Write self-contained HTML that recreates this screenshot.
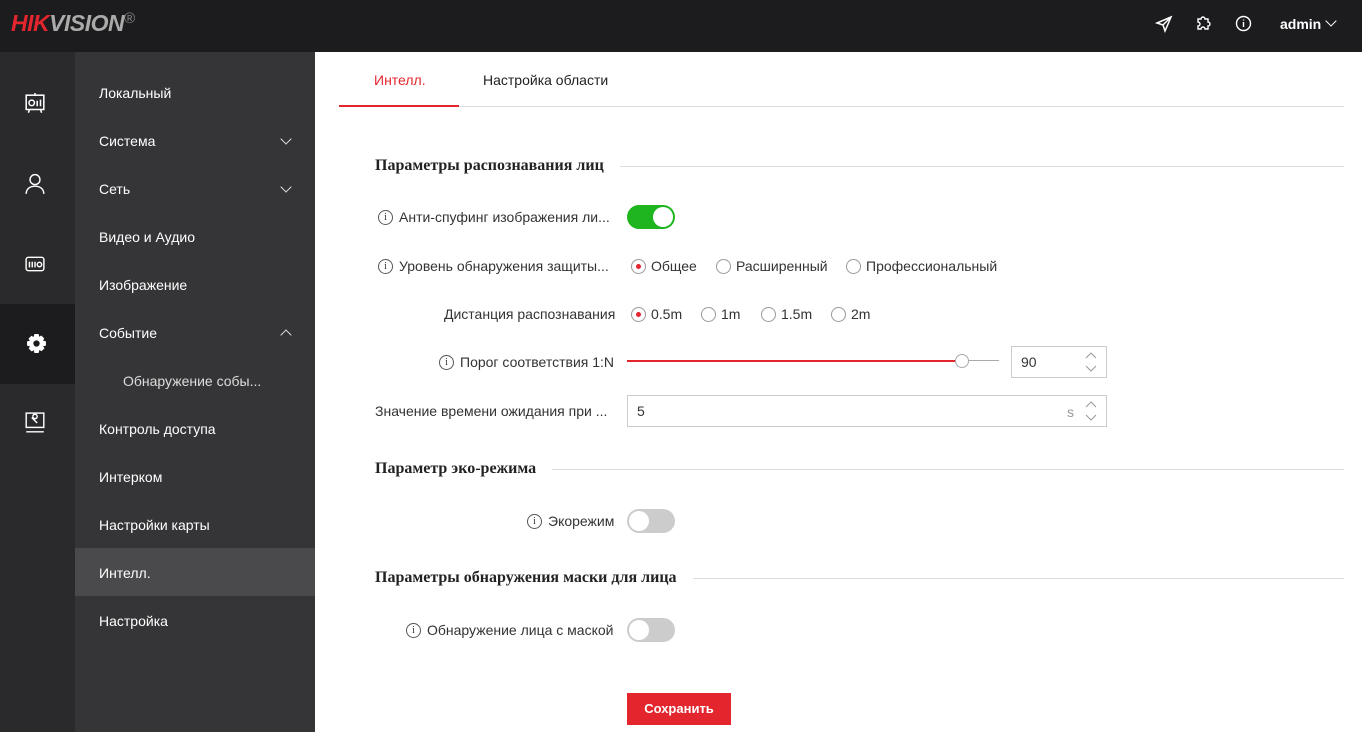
<!DOCTYPE html>
<html><head><meta charset="utf-8"><style>
*{box-sizing:border-box;margin:0;padding:0}
body{width:1362px;height:732px;overflow:hidden;font-family:"Liberation Sans",Arial,sans-serif;font-size:14px;color:#333;background:#fff;position:relative}
.top{position:absolute;left:0;top:0;width:1362px;height:52px;background:#1c1c1e}
.logo{position:absolute;left:11px;top:10px;font-size:23px;font-weight:bold;font-style:italic;letter-spacing:-0.5px}
.rail{position:absolute;left:0;top:52px;width:75px;height:680px;background:#2a2a2c}
.menu{position:absolute;left:75px;top:52px;width:240px;height:680px;background:#353537}
.mi{position:absolute;left:24px;color:#fff;font-size:14px}
.chev{position:absolute;left:207px;width:8px;height:8px;border-right:1.6px solid #ddd;border-bottom:1.6px solid #ddd}
.tab{position:absolute;top:72px;font-size:14px}
.sec{position:absolute;left:375px;font-family:"Liberation Serif",serif;font-weight:bold;font-size:16px;color:#222}
.line{position:absolute;height:1px;background:#ddd}
.lbl{position:absolute;font-size:14px;color:#333;text-align:right;white-space:nowrap}
.info{display:inline-block;width:15px;height:15px;border:1px solid #555;border-radius:50%;font-size:10px;line-height:13px;text-align:center;margin-right:6px;vertical-align:top;position:relative;top:1px;font-family:"Liberation Serif",serif}
.tg{position:absolute;left:627px;width:48px;height:24px;border-radius:12px;background:#ccc}
.tg i{position:absolute;top:2px;width:20px;height:20px;border-radius:50%;background:#fff}
.rad{position:absolute;font-size:14px;color:#333}
.rad b{display:inline-block;width:15px;height:15px;border:1px solid #999;border-radius:50%;vertical-align:-3px;margin-right:5px;position:relative}
.rad b.on::after{content:"";position:absolute;left:4px;top:4px;width:5px;height:5px;border-radius:50%;background:#e3262e}
.inp{position:absolute;border:1px solid #ccc;background:#fff;font-size:14px;padding-left:9px}
</style></head><body>
<div class="top">
<div class="logo"><span style="color:#e3262e">HIK</span><span style="color:#aaa">VISION</span><span style="color:#888;font-size:15px;font-style:normal;font-weight:normal;vertical-align:top">®</span></div>
<svg style="position:absolute;left:1155px;top:15px" width="18" height="18" viewBox="0 0 18 18" fill="none" stroke="#fff" stroke-width="1.5"><path d="M16 2L2 8l6 2 2 6z M8 10l8-8"/></svg>
<svg style="position:absolute;left:1195px;top:14px" width="18" height="18" viewBox="0 0 18 18" fill="none" stroke="#fff" stroke-width="1.4"><path d="M3 5h3a2 2 0 1 1 4 0h3v3a2 2 0 1 1 0 4v3h-3a2 2 0 1 0-4 0H3v-3a2 2 0 1 0 0-4z"/></svg>
<svg style="position:absolute;left:1235px;top:15px" width="17" height="17" viewBox="0 0 17 17" fill="none" stroke="#fff" stroke-width="1.4"><circle cx="8.5" cy="8.5" r="7"/><path d="M8.5 7v5M8.5 4.5v1"/></svg>
<div style="position:absolute;left:1280px;top:16px;color:#fff;font-weight:bold;font-size:14px">admin</div>
<div style="position:absolute;left:1327px;top:17px;width:8px;height:8px;border-right:1.5px solid #fff;border-bottom:1.5px solid #fff;transform:rotate(45deg)"></div>
</div>
<div class="rail">
<svg style="position:absolute;left:25px;top:41px" width="20" height="22" viewBox="0 0 18 20" fill="none" stroke="#fff" stroke-width="1.4"><rect x="1" y="2" width="16" height="13"/><circle cx="6" cy="9" r="2.5"/><path d="M11 7v5M14 6v6M4 15l-1 3M14 15l1 3M9 0v2"/></svg>
<svg style="position:absolute;left:25px;top:121px" width="20" height="22" viewBox="0 0 18 20" fill="none" stroke="#fff" stroke-width="1.3"><circle cx="9" cy="6" r="4.5"/><path d="M1 19c0-5 4-7 8-7s8 2 8 7"/></svg>
<svg style="position:absolute;left:25px;top:202px" width="20" height="20" viewBox="0 0 18 18" fill="none" stroke="#fff" stroke-width="1.3"><rect x="1" y="3" width="16" height="12" rx="2"/><path d="M4 7v5M6.5 7v5M9 7v5"/><circle cx="13" cy="9.5" r="2"/></svg>
<div style="position:absolute;left:0;top:252px;width:75px;height:80px;background:#1c1c1e"></div>
<svg style="position:absolute;left:26px;top:281px" width="21" height="21" viewBox="0 0 20 20"><path fill="#fff" d="M8 1h4l.6 2.6 2-1.2 2.8 2.8-1.2 2L19 8v4l-2.6.6 1.2 2-2.8 2.8-2-1.2L12 19H8l-.6-2.6-2 1.2-2.8-2.8 1.2-2L1 12V8l2.6-.6-1.2-2 2.8-2.8 2 1.2z"/><circle cx="10" cy="10" r="3" fill="#1c1c1e"/></svg>
<svg style="position:absolute;left:25px;top:360px" width="20" height="22" viewBox="0 0 18 20" fill="none" stroke="#fff" stroke-width="1.3"><rect x="1" y="1" width="16" height="13"/><path d="M1 18h16M6 5l5 5M7 4a2 2 0 1 1 0 .1"/></svg>
</div>
<div class="menu">
<div class="mi" style="top:33px">Локальный</div>
<div class="mi" style="top:81px">Система</div><div class="chev" style="top:83px;transform:rotate(45deg)"></div>
<div class="mi" style="top:129px">Сеть</div><div class="chev" style="top:131px;transform:rotate(45deg)"></div>
<div class="mi" style="top:177px">Видео и Аудио</div>
<div class="mi" style="top:225px">Изображение</div>
<div class="mi" style="top:273px">Событие</div><div class="chev" style="top:279px;transform:rotate(-135deg)"></div>
<div class="mi" style="top:321px;left:48px;color:#ddd">Обнаружение собы...</div>
<div class="mi" style="top:369px">Контроль доступа</div>
<div class="mi" style="top:417px">Интерком</div>
<div class="mi" style="top:465px">Настройки карты</div>
<div style="position:absolute;left:0;top:496px;width:240px;height:48px;background:#4a4a4c"></div>
<div class="mi" style="top:513px">Интелл.</div>
<div class="mi" style="top:561px">Настройка</div>
</div>
<div class="tab" style="left:374px;color:#e3262e">Интелл.</div>
<div class="tab" style="left:483px;color:#222">Настройка области</div>
<div class="line" style="left:339px;top:106px;width:1005px"></div>
<div style="position:absolute;left:339px;top:105px;width:120px;height:2px;background:#e3262e"></div>

<div class="sec" style="top:157px">Параметры распознавания лиц</div>
<div class="line" style="left:620px;top:166px;width:724px"></div>
<div class="lbl" style="left:378px;top:209px"><span class="info">i</span>Анти-спуфинг изображения ли...</div>
<div class="tg" style="top:205px;background:#1fb51f"><i style="left:26px"></i></div>
<div class="lbl" style="left:378px;top:258px"><span class="info">i</span>Уровень обнаружения защиты...</div>
<div class="rad" style="left:631px;top:258px"><b class="on"></b>Общее</div>
<div class="rad" style="left:716px;top:258px"><b></b>Расширенный</div>
<div class="rad" style="left:846px;top:258px"><b></b>Профессиональный</div>
<div class="lbl" style="left:444px;top:306px">Дистанция распознавания</div>
<div class="rad" style="left:631px;top:306px"><b class="on"></b>0.5m</div>
<div class="rad" style="left:701px;top:306px"><b></b>1m</div>
<div class="rad" style="left:761px;top:306px"><b></b>1.5m</div>
<div class="rad" style="left:831px;top:306px"><b></b>2m</div>
<div class="lbl" style="left:439px;top:354px"><span class="info">i</span>Порог соответствия 1:N</div>
<div style="position:absolute;left:627px;top:360px;width:335px;height:2px;background:#e3262e"></div>
<div style="position:absolute;left:962px;top:360px;width:37px;height:1px;background:#aaa"></div>
<div style="position:absolute;left:955px;top:354px;width:14px;height:14px;border-radius:50%;background:#fff;border:1px solid #aaa"></div>
<div class="inp" style="left:1011px;top:346px;width:96px;height:32px;line-height:30px">90</div>
<svg style="position:absolute;left:1085px;top:351px" width="12" height="22" viewBox="0 0 12 22" fill="none" stroke="#999" stroke-width="1"><path d="M1 7l5-5 5 5M1 15l5 5 5-5"/></svg>
<div class="lbl" style="left:375px;top:403px">Значение времени ожидания при ...</div>
<div class="inp" style="left:627px;top:395px;width:480px;height:32px;line-height:30px">5</div>
<div style="position:absolute;left:1067px;top:404px;color:#999;font-size:14px">s</div>
<svg style="position:absolute;left:1085px;top:400px" width="12" height="22" viewBox="0 0 12 22" fill="none" stroke="#999" stroke-width="1"><path d="M1 7l5-5 5 5M1 15l5 5 5-5"/></svg>

<div class="sec" style="top:460px">Параметр эко-режима</div>
<div class="line" style="left:552px;top:469px;width:792px"></div>
<div class="lbl" style="left:527px;top:513px"><span class="info">i</span>Экорежим</div>
<div class="tg" style="top:509px"><i style="left:2px"></i></div>

<div class="sec" style="top:569px">Параметры обнаружения маски для лица</div>
<div class="line" style="left:693px;top:578px;width:651px"></div>
<div class="lbl" style="left:406px;top:622px"><span class="info">i</span>Обнаружение лица с маской</div>
<div class="tg" style="top:618px"><i style="left:2px"></i></div>
<div style="position:absolute;left:627px;top:693px;width:104px;height:32px;background:#e3262e;color:#fff;font-weight:bold;font-size:13px;text-align:center;line-height:32px">Сохранить</div>
</body></html>
